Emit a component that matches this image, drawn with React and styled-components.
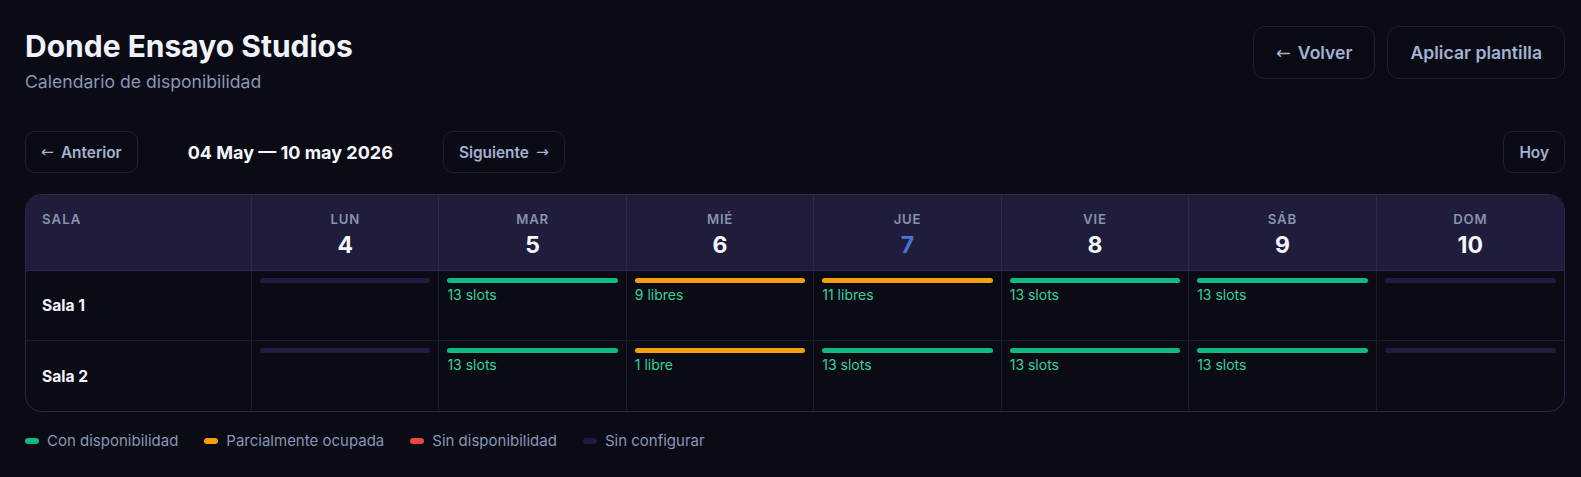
import React from "react";
import styled, { createGlobalStyle } from "styled-components";

const GlobalStyle = createGlobalStyle`
  body {
    margin: 0;
    background: #0b0b16;
    font-family: Inter, "Noto Sans", sans-serif;
    color: #f1f3fa;
  }
`;

const STATUS = {
  free: "#10b981",
  partial: "#f59e0b",
  full: "#ef4444",
  none: "#231a42",
};

const days = [
  { name: "LUN", num: 4 },
  { name: "MAR", num: 5 },
  { name: "MIÉ", num: 6 },
  { name: "JUE", num: 7, today: true },
  { name: "VIE", num: 8 },
  { name: "SÁB", num: 9 },
  { name: "DOM", num: 10 },
];

const rooms = [
  {
    name: "Sala 1",
    cells: [
      { status: "none" },
      { status: "free", label: "13 slots" },
      { status: "partial", label: "9 libres" },
      { status: "partial", label: "11 libres" },
      { status: "free", label: "13 slots" },
      { status: "free", label: "13 slots" },
      { status: "none" },
    ],
  },
  {
    name: "Sala 2",
    cells: [
      { status: "none" },
      { status: "free", label: "13 slots" },
      { status: "partial", label: "1 libre" },
      { status: "free", label: "13 slots" },
      { status: "free", label: "13 slots" },
      { status: "free", label: "13 slots" },
      { status: "none" },
    ],
  },
];

const legend = [
  { status: "free", label: "Con disponibilidad" },
  { status: "partial", label: "Parcialmente ocupada" },
  { status: "full", label: "Sin disponibilidad" },
  { status: "none", label: "Sin configurar" },
];

const Page = styled.div`
  padding: 26px 16px 30px 25px;
`;

const Header = styled.header`
  display: flex;
  justify-content: space-between;
  align-items: flex-start;
`;

const Title = styled.h1`
  margin: 2px 0 0;
  font-size: 30px;
  line-height: 36px;
  font-weight: 700;
  color: #f1f3fa;
`;

const Subtitle = styled.p`
  margin: 7px 0 0;
  font-size: 17.6px;
  line-height: 22px;
  color: #8797b6;
`;

const Actions = styled.div`
  display: flex;
  gap: 12px;
`;

const Button = styled.button`
  font-family: inherit;
  background: #0b0b16;
  border: 1px solid #1f2033;
  color: #a3b3d1;
  font-weight: 600;
  cursor: pointer;
  display: inline-flex;
  align-items: center;
  gap: 7px;
  font-size: ${(p) => (p.$large ? "17.6px" : "15.4px")};
  height: ${(p) => (p.$large ? "53px" : "42px")};
  padding: ${(p) => (p.$large ? "0 22px" : "0 15px")};
  border-radius: ${(p) => (p.$large ? "12px" : "10px")};
`;

const Arrow = styled.span`
  font-family: "DejaVu Sans", sans-serif;
  font-weight: 400;
  font-size: 1em;
  color: #a3b3d1;
`;

const Nav = styled.div`
  display: flex;
  align-items: center;
  gap: 16px;
  margin-top: 38px;
`;

const RangeLabel = styled.div`
  font-size: 18px;
  font-weight: 700;
  color: #f5f6fb;
  padding: 0 34px;
`;

const Spacer = styled.div`
  flex: 1;
`;

const Table = styled.div`
  margin-top: 21px;
  display: grid;
  grid-template-columns: 226px repeat(7, 1fr);
  border: 1px solid #2b2748;
  border-radius: 16px;
  overflow: hidden;
  background: #0b0b16;
`;

const HeadCell = styled.div`
  background: #1f1d3b;
  padding: 16px 16px 12px;
  height: 76px;
  box-sizing: border-box;
  border-right: 1px solid #2d2852;
  border-bottom: 1px solid #2d2852;
  text-align: ${(p) => (p.$left ? "left" : "center")};
  &:nth-child(8) {
    border-right: none;
  }
`;

const DayName = styled.div`
  font-size: 13.2px;
  line-height: 16px;
  font-weight: 600;
  letter-spacing: ${(p) => (p.$small ? "1.1px" : "0.8px")};
  color: #8792ab;
`;

const DayNum = styled.div`
  margin-top: 4px;
  font-size: 23px;
  line-height: 28px;
  font-weight: 700;
  color: ${(p) => (p.$today ? "#4675d4" : "#f5f6fb")};
`;

const RoomCell = styled.div`
  display: flex;
  align-items: center;
  padding: 0 16px;
  height: 70px;
  box-sizing: border-box;
  font-size: 15.6px;
  font-weight: 700;
  color: #f3f4fa;
  border-right: 1px solid #1d1b30;
  border-bottom: ${(p) => (p.$last ? "none" : "1px solid #1d1b30")};
`;

const DayCell = styled.div`
  padding: 7px 8px 0;
  height: 70px;
  box-sizing: border-box;
  border-right: ${(p) => (p.$lastCol ? "none" : "1px solid #1d1b30")};
  border-bottom: ${(p) => (p.$last ? "none" : "1px solid #1d1b30")};
`;

const Bar = styled.div`
  height: 5px;
  border-radius: 3px;
  background: ${(p) => STATUS[p.$status]};
`;

const CellText = styled.div`
  margin-top: 2px;
  font-size: 14px;
  line-height: 20px;
  color: #34d399;
`;

const Legend = styled.div`
  display: flex;
  gap: 26px;
  margin-top: 19px;
`;

const LegendItem = styled.div`
  display: flex;
  align-items: center;
  gap: 8px;
  font-size: 15px;
  line-height: 20px;
  color: #8797b6;
`;

const Dot = styled.span`
  width: 14px;
  height: 6px;
  border-radius: 3px;
  background: ${(p) => STATUS[p.$status]};
`;

export default function App() {
  return (
    <Page>
      <GlobalStyle />
      <Header>
        <div>
          <Title>Donde Ensayo Studios</Title>
          <Subtitle>Calendario de disponibilidad</Subtitle>
        </div>
        <Actions>
          <Button $large>
            <Arrow>←</Arrow>Volver
          </Button>
          <Button $large>Aplicar plantilla</Button>
        </Actions>
      </Header>

      <Nav>
        <Button>
          <Arrow>←</Arrow>Anterior
        </Button>
        <RangeLabel>04 May — 10 may 2026</RangeLabel>
        <Button>
          Siguiente<Arrow>→</Arrow>
        </Button>
        <Spacer />
        <Button>Hoy</Button>
      </Nav>

      <Table>
        <HeadCell $left>
          <DayName $small>SALA</DayName>
        </HeadCell>
        {days.map((d) => (
          <HeadCell key={d.name}>
            <DayName>{d.name}</DayName>
            <DayNum $today={d.today}>{d.num}</DayNum>
          </HeadCell>
        ))}
        {rooms.map((room, ri) => {
          const last = ri === rooms.length - 1;
          return (
            <React.Fragment key={room.name}>
              <RoomCell $last={last}>{room.name}</RoomCell>
              {room.cells.map((c, ci) => (
                <DayCell key={ci} $last={last} $lastCol={ci === 6}>
                  <Bar $status={c.status} />
                  {c.label && <CellText>{c.label}</CellText>}
                </DayCell>
              ))}
            </React.Fragment>
          );
        })}
      </Table>

      <Legend>
        {legend.map((l) => (
          <LegendItem key={l.label}>
            <Dot $status={l.status} />
            {l.label}
          </LegendItem>
        ))}
      </Legend>
    </Page>
  );
}
